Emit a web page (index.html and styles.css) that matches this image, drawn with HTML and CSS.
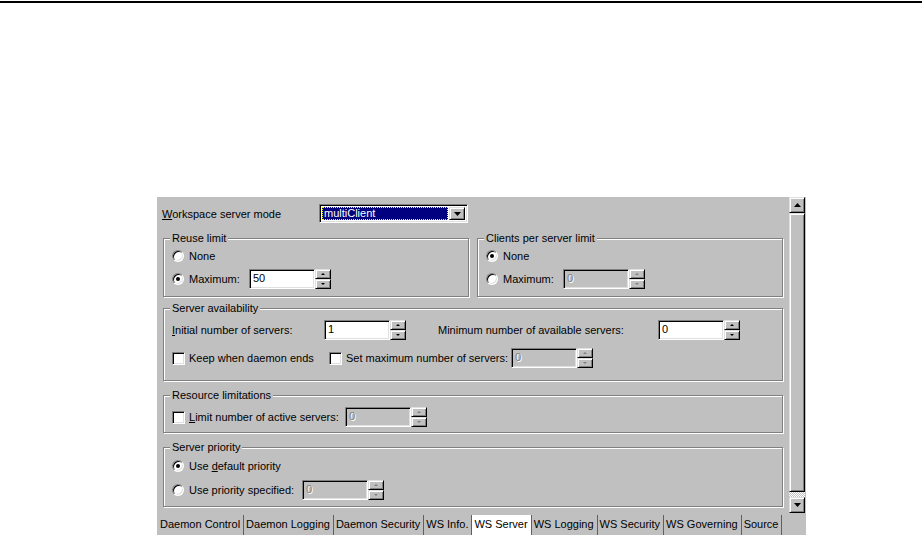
FILE: index.html
```html
<!DOCTYPE html>
<html lang="en">
<head>
    <meta charset="UTF-8">
    <meta name="viewport" content="width=device-width, initial-scale=1.0">
    <title>WS Server</title>
    <link rel="stylesheet" href="styles.css">
</head>
<body>
    <div class="topline"></div>
    <div class="panel">
        <div class="view">
            <div class="content">
                <div class="mode-row">
                    <span class="mode-label"><u>W</u>orkspace server mode</span>
                    <div class="combo">
                        <div class="combo-value"><span>multiClient</span></div>
                        <div class="combo-btn">
                            <svg width="7" height="4" viewBox="0 0 7 4"><path d="M0 0H7L3.5 4Z"/></svg>
                        </div>
                    </div>
                </div>

                <div class="pair">
                    <div class="group">
                        <div class="legend">Reuse limit</div>
                        <div class="row h22"><span class="radio"></span><span class="txt">None</span></div>
                        <div class="row h24">
                            <span class="radio checked"></span><span class="txt w-max">Maximum:</span>
                            <div class="spin">
                                <div class="edit">50</div>
                                <div class="updown"><span class="btn up"></span><span class="btn down"></span></div>
                            </div>
                        </div>
                    </div>
                    <div class="group">
                        <div class="legend">Clients per server limit</div>
                        <div class="row h22"><span class="radio checked"></span><span class="txt">None</span></div>
                        <div class="row h24">
                            <span class="radio"></span><span class="txt w-max">Maximum:</span>
                            <div class="spin off">
                                <div class="edit">0</div>
                                <div class="updown"><span class="btn up"></span><span class="btn down"></span></div>
                            </div>
                        </div>
                    </div>
                </div>

                <div class="group avail">
                    <div class="legend">Server availability</div>
                    <div class="row line1">
                        <span class="plain w-initial"><u>I</u>nitial number of servers:</span>
                        <div class="spin">
                            <div class="edit">1</div>
                            <div class="updown"><span class="btn up"></span><span class="btn down"></span></div>
                        </div>
                        <span class="plain w-minimum">Minimum number of available servers:</span>
                        <div class="spin">
                            <div class="edit">0</div>
                            <div class="updown"><span class="btn up"></span><span class="btn down"></span></div>
                        </div>
                    </div>
                    <div class="row line2">
                        <span class="check"></span><span class="txt w-keep">Keep when daemon ends</span>
                        <span class="check"></span><span class="txt w-setmax">Set maximum number of servers:</span>
                        <div class="spin off">
                            <div class="edit">0</div>
                            <div class="updown"><span class="btn up"></span><span class="btn down"></span></div>
                        </div>
                    </div>
                </div>

                <div class="group resource">
                    <div class="legend">Resource limitations</div>
                    <div class="row line1">
                        <span class="check"></span><span class="txt w-limit"><u>L</u>imit number of active servers:</span>
                        <div class="spin off">
                            <div class="edit">0</div>
                            <div class="updown"><span class="btn up"></span><span class="btn down"></span></div>
                        </div>
                    </div>
                </div>

                <div class="group priority">
                    <div class="legend">Server priority</div>
                    <div class="row h23"><span class="radio checked"></span><span class="txt">Use <u>d</u>efault priority</span></div>
                    <div class="row h25">
                        <span class="radio"></span><span class="txt w-prio">Use priority specified:</span>
                        <div class="spin off">
                            <div class="edit">0</div>
                            <div class="updown"><span class="btn up"></span><span class="btn down"></span></div>
                        </div>
                    </div>
                </div>
            </div>

            <div class="scrollbar">
                <div class="sb-btn">
                    <svg width="7" height="4" viewBox="0 0 7 4"><path d="M3.5 0L7 4H0Z"/></svg>
                </div>
                <div class="sb-thumb"></div>
                <div class="sb-track"></div>
                <div class="sb-btn">
                    <svg width="7" height="4" viewBox="0 0 7 4"><path d="M0 0H7L3.5 4Z"/></svg>
                </div>
            </div>
        </div>

        <div class="tabs">
            <span class="tab">Daemon Control</span>
            <span class="tab">Daemon Logging</span>
            <span class="tab">Daemon Security</span>
            <span class="tab">WS Info.</span>
            <span class="tab active">WS Server</span>
            <span class="tab">WS Logging</span>
            <span class="tab">WS Security</span>
            <span class="tab">WS Governing</span>
            <span class="tab">Source</span>
        </div>
    </div>
</body>
</html>
```

FILE: styles.css
```css
body {
    margin: 0;
    background: #fff;
    font-family: "Liberation Sans", Arial, sans-serif;
    font-size: 11px;
    color: #000;
}
.topline {
    margin-top: 1px;
    width: 922px;
    height: 2px;
    background: #000;
}
.panel {
    margin: 194px 0 0 157px;
    width: 649px;
    height: 338px;
    background: #c0c0c0;
    overflow: hidden;
}
.view {
    display: flex;
    height: 316px;
}
.content {
    width: 632px;
    padding: 7px 6px 0;
    box-sizing: border-box;
}

/* top combo row */
.mode-row {
    display: flex;
    align-items: center;
    height: 19px;
    margin-left: -1px;
}
.mode-label {
    width: 157px;
}
.combo {
    display: flex;
    width: 149px;
    height: 19px;
    box-sizing: border-box;
    padding: 2px;
    background: #fff;
    border: 1px solid;
    border-color: #808080 #fff #fff #808080;
    box-shadow: inset 1px 1px 0 #000, inset -1px -1px 0 #dfdfdf;
}
.combo-value {
    flex: 1;
    background: #000080;
    color: #fff;
    outline: 1px dotted #ffff00;
    outline-offset: -1px;
    padding-left: 2px;
    line-height: 13px;
    margin-right: 1px;
}
.combo-btn {
    width: 16px;
    display: flex;
    align-items: center;
    justify-content: center;
    box-sizing: border-box;
    background: #c0c0c0;
    border: 1px solid;
    border-color: #dfdfdf #000 #000 #dfdfdf;
    box-shadow: inset 1px 1px 0 #fff, inset -1px -1px 0 #808080;
}

/* group boxes */
.pair {
    display: flex;
    gap: 8px;
    margin-top: 15px;
}
.pair .group {
    flex: 1;
}
.group {
    border: 1px solid #808080;
    box-shadow: inset 1px 1px 0 #fff, 1px 1px 0 #fff;
    padding: 0 0 5px 8px;
}
.legend {
    display: table;
    margin: -7px 0 0 -2px;
    padding: 0 2px;
    line-height: 13px;
    background: #c0c0c0;
}
.avail {
    margin-top: 11px;
    padding-bottom: 11px;
}
.resource {
    margin-top: 14px;
}
.priority {
    margin-top: 14px;
    padding-bottom: 4px;
}
.row {
    display: flex;
    align-items: center;
}
.h22 { height: 22px; }
.h23 { height: 23px; }
.h24 { height: 24px; }
.h25 { height: 25px; }
.line1 {
    margin-top: 5px;
    height: 20px;
}
.line2 {
    margin-top: 7px;
    height: 22px;
}
.txt {
    margin-left: 5px;
    white-space: nowrap;
}
.check + .txt {
    margin-left: 4px;
}
.w-max { width: 60px; }
.w-initial { width: 152px; }
.w-minimum { width: 220px; margin-left: 32px; }
.w-keep { width: 140px; }
.w-setmax { width: 165px; }
.w-limit { width: 156px; }
.w-prio { width: 113px; }

/* radio / checkbox */
.radio {
    position: relative;
    flex: none;
    width: 12px;
    height: 12px;
    box-sizing: border-box;
    border-radius: 50%;
    background: #fff;
    border: 1px solid;
    border-color: #808080 #fff #fff #808080;
    box-shadow: inset 1px 1px 0 #000, inset -1px -1px 0 #dfdfdf;
}
.radio.checked::after {
    content: "";
    position: absolute;
    left: 3px;
    top: 3px;
    width: 4px;
    height: 4px;
    border-radius: 50%;
    background: #000;
}
.check {
    flex: none;
    width: 13px;
    height: 13px;
    box-sizing: border-box;
    background: #fff;
    border: 1px solid;
    border-color: #808080 #fff #fff #808080;
    box-shadow: inset 1px 1px 0 #000, inset -1px -1px 0 #dfdfdf;
}

/* edit + spinner */
.spin {
    display: flex;
    height: 20px;
}
.edit {
    width: 66px;
    height: 20px;
    box-sizing: border-box;
    padding-left: 3px;
    line-height: 16px;
    background: #fff;
    border: 1px solid;
    border-color: #808080 #fff #fff #808080;
    box-shadow: inset 1px 1px 0 #000, inset -1px -1px 0 #dfdfdf;
}
.updown {
    display: flex;
    flex-direction: column;
    width: 16px;
}
.btn {
    flex: 1;
    display: flex;
    align-items: center;
    justify-content: center;
    box-sizing: border-box;
    background: #c0c0c0;
    border: 1px solid;
    border-color: #dfdfdf #000 #000 #dfdfdf;
    box-shadow: inset 1px 1px 0 #fff, inset -1px -1px 0 #808080;
}
.btn::after {
    content: "";
    width: 0;
    height: 0;
    border-left: 2px solid transparent;
    border-right: 2px solid transparent;
}
.up::after {
    border-bottom: 2px solid #000;
}
.down::after {
    border-top: 2px solid #000;
}
.off .edit {
    background: #c0c0c0;
    color: #808080;
    text-shadow: 1px 1px 0 #fff;
}
.off .up::after {
    border-bottom-color: #808080;
}
.off .down::after {
    border-top-color: #808080;
}

/* scrollbar */
.scrollbar {
    display: flex;
    flex-direction: column;
    width: 16px;
}
.sb-btn {
    height: 16px;
    display: flex;
    align-items: center;
    justify-content: center;
    box-sizing: border-box;
    background: #c0c0c0;
    border: 1px solid;
    border-color: #dfdfdf #000 #000 #dfdfdf;
    box-shadow: inset 1px 1px 0 #fff, inset -1px -1px 0 #808080;
}
.sb-thumb {
    flex: 1;
    box-sizing: border-box;
    background: #c0c0c0;
    border: 1px solid;
    border-color: #dfdfdf #000 #000 #dfdfdf;
    box-shadow: inset 1px 1px 0 #fff, inset -1px -1px 0 #808080;
}
.sb-track {
    height: 5px;
    background-image: conic-gradient(#fff 25%, #c0c0c0 0 50%, #fff 0 75%, #c0c0c0 0);
    background-size: 2px 2px;
}

/* sheet tabs */
.tabs {
    display: flex;
    height: 22px;
    box-sizing: border-box;
    padding: 2px 0 0 1px;
}
.tab {
    padding: 0 3px 0 2px;
    line-height: 18px;
    border-right: 1px solid #606060;
    white-space: nowrap;
}
.tab.active {
    background: #fff;
}
```
